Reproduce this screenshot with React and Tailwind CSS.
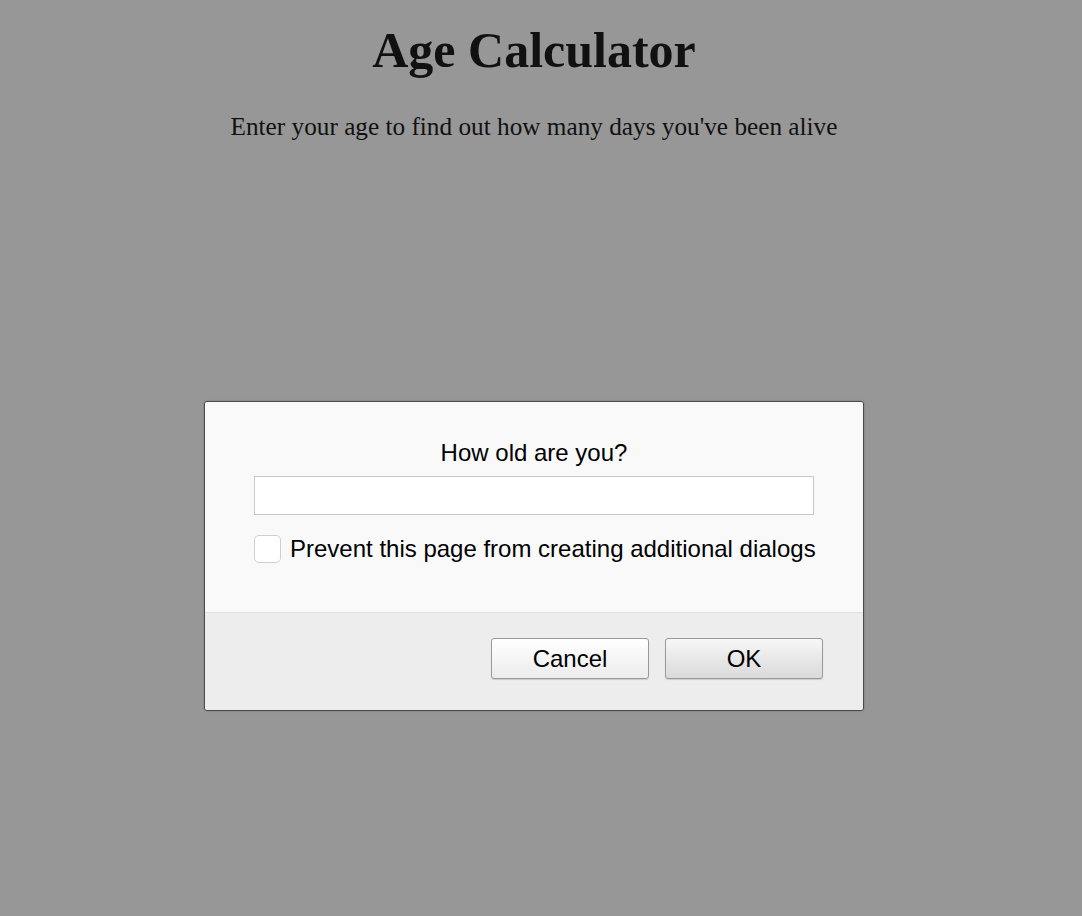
import { useState } from 'react'

function App() {
  const [age, setAge] = useState('')
  const [prevent, setPrevent] = useState(false)

  return (
    <div className="min-h-screen bg-[#979797] pr-[14px] flex flex-col items-center font-['Liberation_Serif',serif] text-[#111]">
      <h1 className="mt-[20px] text-[50px] leading-[60px] font-bold">Age Calculator</h1>
      <p className="mt-[31px] text-[25.25px] leading-[30px]">Enter your age to find out how many days you've been alive</p>

      <div className="mt-[260px] w-[660px] border border-[#4a4a4a] rounded-[3px] overflow-hidden font-['Liberation_Sans',Arial,sans-serif] text-black shadow-[0_0_2px_rgba(0,0,0,0.25)]">
        <div className="bg-[#f9f9f9] px-[49px] pt-[36px] pb-[48px] border-b border-[#e0e0e0] flex flex-col">
          <label className="text-center text-[24px] leading-[30px]">How old are you?</label>
          <input
            value={age}
            onChange={(e) => setAge(e.target.value)}
            className="mt-[8px] h-[39px] bg-white border border-[#c8c8c8] px-2 text-[20px] outline-none"
          />
          <label className="mt-[19px] flex items-center gap-[9px] text-[24px] leading-[30px] whitespace-nowrap cursor-pointer">
            <span
              onClick={() => setPrevent(!prevent)}
              className="shrink-0 w-[27px] h-[28px] rounded-[5px] border border-[#d0d0d0] bg-white flex items-center justify-center text-[16px]"
            >
              {prevent ? '✓' : ''}
            </span>
            <span>Prevent this page from creating additional dialogs</span>
          </label>
        </div>
        <div className="bg-[#ededed] h-[97px] pr-[40px] flex items-start justify-end gap-[16px] pt-[25px]">
          <button className="w-[158px] h-[41px] rounded-[3px] border border-[#9a9a9a] bg-gradient-to-b from-white to-[#ececec] shadow-[0_1px_1px_rgba(0,0,0,0.15)] text-[24px] leading-none">
            Cancel
          </button>
          <button className="w-[158px] h-[41px] rounded-[3px] border border-[#9a9a9a] bg-gradient-to-b from-[#f7f7f7] to-[#dadada] shadow-[0_1px_1px_rgba(0,0,0,0.15)] text-[24px] leading-none">
            OK
          </button>
        </div>
      </div>
    </div>
  )
}

export default App
